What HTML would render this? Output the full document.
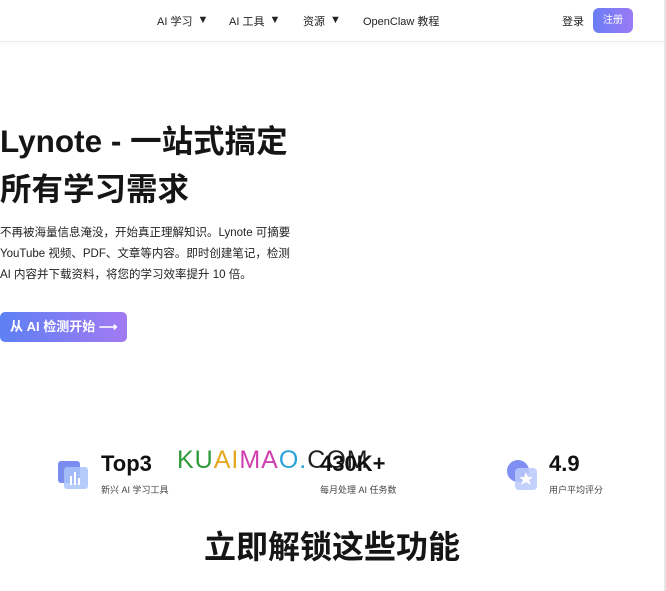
<!DOCTYPE html>
<html><head><meta charset="utf-8"><style>
body{margin:0;width:666px;height:591px;overflow:hidden;background:#fff;font-family:"Liberation Sans","Noto Sans CJK SC",sans-serif;color:#111;position:relative}
.nav{position:absolute;top:0;left:0;width:664px;height:41px;border-bottom:1px solid #eee;box-shadow:0 1px 3px rgba(0,0,0,.04)}
.nav span{position:absolute;top:13px;font-size:11px;color:#222}
.tri{font-size:6px;margin-left:5px;vertical-align:2px}
.reg{position:absolute;left:593px;top:8px;width:40px;height:25px;border-radius:6px;background:linear-gradient(90deg,#6a7ef5,#9b7af5);color:#fff;font-size:10px;text-align:center;line-height:25px}
.sb{position:absolute;left:664px;top:0;width:2px;height:591px;background:#e6e6e6}
h1{position:absolute;left:0;top:117px;margin:0;font-size:31.5px;line-height:48px;font-weight:bold;color:#151515}
p{position:absolute;left:0;top:223px;margin:0;font-size:11.5px;line-height:21px;color:#222}
.btn{position:absolute;left:0;top:312px;width:127px;height:30px;border-radius:5px;background:linear-gradient(90deg,#5d80f3,#a27af3);color:#fff;font-weight:bold;font-size:13px;line-height:30px;padding-left:10px;box-sizing:border-box}
.big{position:absolute;font-size:22px;font-weight:bold;color:#111}
.sm{position:absolute;font-size:9px;color:#444}
.wm{position:absolute;left:177px;top:446px;font-size:25px;letter-spacing:1px;font-family:"Liberation Sans",sans-serif}
h2{position:absolute;left:0;width:664px;text-align:center;top:522px;margin:0;font-size:32px;font-weight:bold;color:#151515}
</style></head><body>
<div class="nav">
<span style="left:157px">AI 学习<span class="tri" style="position:static">▼</span></span>
<span style="left:229px">AI 工具<span class="tri" style="position:static">▼</span></span>
<span style="left:303px">资源<span class="tri" style="position:static">▼</span></span>
<span style="left:363px">OpenClaw 教程</span>
<span style="left:562px">登录</span>
<div class="reg">注册</div>
</div>
<div class="sb"></div>
<h1>Lynote - 一站式搞定<br>所有学习需求</h1>
<p>不再被海量信息淹没，开始真正理解知识。Lynote 可摘要<br>YouTube 视频、PDF、文章等内容。即时创建笔记，检测<br>AI 内容并下载资料，将您的学习效率提升 10 倍。</p>
<div class="btn">从 AI 检测开始 ⟶</div>
<svg style="position:absolute;left:58px;top:460px" width="32" height="30"><rect x="0" y="1" width="22" height="22" rx="3" fill="#7b8cf0"/><rect x="6" y="7" width="24" height="22" rx="3" fill="#a9c4fb" opacity=".85"/><rect x="12" y="16" width="2" height="9" fill="#fff"/><rect x="16" y="12" width="2" height="13" fill="#fff"/><rect x="20" y="18" width="2" height="7" fill="#fff"/></svg>
<div class="big" style="left:101px;top:451px">Top3</div>
<div class="sm" style="left:101px;top:483px">新兴 AI 学习工具</div>
<div class="wm"><span style="color:#2e9a3a">KU</span><span style="color:#e5a820">AI</span><span style="color:#d23fae">MA</span><span style="color:#2aa3d9">O.</span><span style="color:#222">COM</span></div>
<div class="big" style="left:320px;top:451px">430K+</div>
<div class="sm" style="left:320px;top:483px">每月处理 AI 任务数</div>
<svg style="position:absolute;left:506px;top:458px" width="34" height="34"><circle cx="12" cy="13" r="11" fill="#7f8ef2"/><rect x="9" y="10" width="22" height="22" rx="4" fill="#b9c9fb" opacity=".85"/><polygon points="20,14 22,19 27,19 23,22 25,27 20,24 15,27 17,22 13,19 18,19" fill="#fff"/></svg>
<div class="big" style="left:549px;top:451px">4.9</div>
<div class="sm" style="left:549px;top:483px">用户平均评分</div>
<h2>立即解锁这些功能</h2>
</body></html>
